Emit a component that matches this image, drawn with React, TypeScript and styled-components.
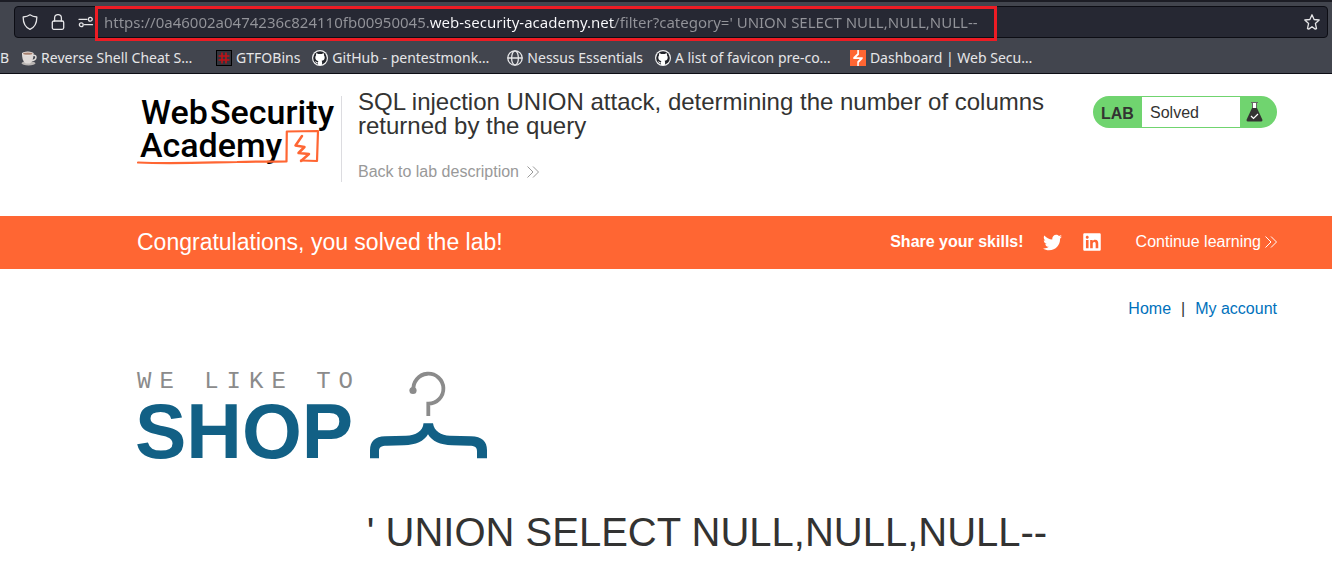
import React from "react";
import styled, { createGlobalStyle, css } from "styled-components";
import { FaTwitter, FaLinkedin } from "react-icons/fa";

const GlobalStyle = createGlobalStyle`
  * { box-sizing: border-box; }
  body {
    margin: 0;
    background: #fff;
    color: #333332;
    font: 16px/24px "Liberation Sans", Arial, sans-serif;
  }
  a { color: inherit; text-decoration: none; }
  h1, h2, p { margin: 0; font-weight: 400; }
  svg { display: block; flex: none; }
`;

/* ---------- browser chrome ---------- */

const Chrome = styled.div`
  background: #42454e;
  border-top: 2px solid #1c1d25;
  border-bottom: 1px solid #0c0d14;
  color: #e6e6e8;
  font-family: "Noto Sans", sans-serif;
  font-size: 15px;
`;

const AddressRow = styled.div`
  padding: 4px 4px 0 14px;
`;

const AddressBar = styled.div`
  display: flex;
  align-items: center;
  height: 32px;
  padding: 0 7px;
  background: #262833;
  border: 1px solid #0c0d14;
  border-radius: 4px;
`;

const ToolButton = styled.button<{ $end?: boolean }>`
  display: flex;
  justify-content: ${(p) => (p.$end ? "flex-end" : "flex-start")};
  width: 28px;
  padding: 0;
  border: 0;
  background: none;
  color: #e6e6e8;
`;

const UrlHighlight = styled.div`
  display: flex;
  align-items: center;
  width: 902px;
  height: 35px;
  margin: 2px auto 0 -11px;
  border: 3px solid #ed1c24;
`;

const UrlInput = styled.input`
  flex: 1;
  min-width: 0;
  height: 28px;
  margin: 0 6px;
  padding: 0 0 2px;
  border: 0;
  outline: 0;
  font: inherit;
  color: transparent;
  caret-color: #fff;
  background: linear-gradient(
    90deg,
    #93949a 0 326px,
    #fbfbfe 326px 511px,
    #93949a 511px
  );
  background-clip: text;
  -webkit-background-clip: text;
`;

const BookmarkBar = styled.nav`
  display: flex;
  align-items: center;
  gap: 12px;
  height: 35px;
  padding-top: 5px;
  overflow: hidden;
  white-space: nowrap;
  font-size: 14px;
`;

const Bookmark = styled.a`
  display: flex;
  flex: none;
  align-items: center;
  gap: 4px;
`;

const BookmarkTitle = styled.span<{ $long?: boolean }>`
  line-height: 24px;
  ${(p) => p.$long && css`width: 163px;`}
`;

/* ---------- lab header ---------- */

const Container = styled.div`
  padding: 0 55px 0 137px;
`;

const LabHeader = styled(Container).attrs({ as: "header" })`
  display: flex;
  align-items: flex-start;
  padding-top: 22px;
  padding-bottom: 32px;
`;

const AcademyLogo = styled.a`
  flex: none;
  height: 86px;
  width: 205px;
  border-right: 1px solid #dcdce0;
`;

const LabInfo = styled.div`
  flex: 1;
  padding: 0 40px 0 16px;
`;

const LabTitle = styled.h2`
  margin-top: -6px;
  font-size: 24px;
  line-height: 24px;
`;

const BackLink = styled.a`
  display: inline-flex;
  align-items: center;
  gap: 8px;
  margin-top: 22px;
  color: #999;
`;

const LabStatus = styled.div`
  display: flex;
  flex: none;
  width: 184px;
  height: 32px;
  padding: 1px 0;
  border-radius: 16px;
  background: #70d46f;
  line-height: 32px;
`;

const LabTag = styled.strong`
  width: 49px;
  padding-left: 8px;
  line-height: 34px;
`;

const LabState = styled.p`
  width: 98px;
  padding-left: 8px;
  background: #fff;
`;

const FlaskSlot = styled.span`
  padding: 4px 0 0 6px;
`;

/* ---------- solved banner ---------- */

const Banner = styled(Container).attrs({ as: "section" })`
  display: flex;
  align-items: center;
  height: 53px;
  padding-bottom: 1px;
  background: #ff6633;
  color: #fff;
`;

const BannerText = styled.p`
  margin-right: auto;
  font-size: 23px;
`;

const ShareLinks = styled.div`
  display: flex;
  align-items: center;
  gap: 20px;
  margin: 0 34px 0 19px;
`;

const ContinueLink = styled.a`
  display: flex;
  align-items: center;
  gap: 4px;
`;

/* ---------- shop ---------- */

const ShopNav = styled.nav`
  display: flex;
  justify-content: flex-end;
  gap: 10px;
  padding-top: 28px;
`;

const ShopLink = styled.a`
  color: #0071bc;
`;

const ShopLogo = styled.div`
  display: flex;
  align-items: flex-start;
  margin-top: 49px;
  height: 96px;
`;

const Wordmark = styled.div`
  width: 232px;
`;

const Tagline = styled.p`
  color: #8b8b8b;
  font-family: "Liberation Mono", monospace;
  font-size: 24px;
  line-height: 24px;
  letter-spacing: 8px;
  white-space: nowrap;
`;

const ShopName = styled.p`
  margin-left: -2px;
  color: #126085;
  font-size: 77px;
  font-weight: 700;
  line-height: 74px;
`;

const Query = styled.h1`
  padding: 42px 0 18px;
  font-size: 40px;
  line-height: 48px;
  text-align: center;
`;

/* ---------- drawings ---------- */

const line = { fill: "none", stroke: "currentColor", strokeWidth: 1.3, strokeLinecap: "round", strokeLinejoin: "round" } as const;

const Shield = () => (
  <svg width="16" height="16" viewBox="0 0 16 16" {...line}>
    <path d="M8 .8c2 1.500 4.300 2 6.800 2.200C14.900 8.500 12.500 13.300 8 15.300 3.500 13.300 1.100 8.500 1.200 3 3.700 2.800 6 2.300 8 .8Z" />
  </svg>
);

const Lock = () => (
  <svg width="16" height="16" viewBox="0 0 16 16" {...line}>
    <rect x="2.300" y="7" width="11.400" height="8.300" rx="1.500" />
    <path d="M4.600 7V4a3.400 3.400 0 0 1 6.800 0v3" />
  </svg>
);

const Permissions = () => (
  <svg width="16" height="16" viewBox="0 0 16 16" {...line}>
    <path d="M1 5.300h8M6.500 10.700h8" />
    <circle cx="12.300" cy="5.300" r="1.900" />
    <circle cx="3.300" cy="10.700" r="1.900" />
  </svg>
);

const Star = () => (
  <svg width="16" height="16" viewBox="0 0 16 16" {...line}>
    <path d="M8 .8l2.100 4.700 5.100.5-3.800 3.400 1.100 5.300-1.200.4L8 12.700l-3.300 2.400-1.200-.4 1.100-5.300L.8 6l5.100-.5Z" />
  </svg>
);

const Cup = () => (
  <svg width="16" height="16" viewBox="0 0 16 16">
    <ellipse cx="7.500" cy="13.200" rx="7" ry="2.200" fill="#b9b5b3" />
    <path d="M11.500 5.500c5-1.500 4.500 5-.8 5" fill="none" stroke="#dedbd9" strokeWidth="1.500" />
    <path d="M1 3.500h11.500c0 5-1 8.500-3.500 10H4.800C2 12 1 8 1 3.500Z" fill="#ded9d7" />
    <ellipse cx="6.800" cy="3.500" rx="5.800" ry="1.900" fill="#efeae8" />
    <ellipse cx="6.800" cy="3.700" rx="4.700" ry="1.100" fill="#a5806f" />
  </svg>
);

const HashTile = () => (
  <svg width="16" height="16" viewBox="0 0 16 16">
    <rect x=".5" y=".5" width="15" height="15" fill="#33353d" stroke="#000" />
    <path d="M6 2.500v11M10 2.500v11M2.500 6h11M2.500 10h11" stroke="#c01217" strokeWidth="1.600" fill="none" />
  </svg>
);

const Octocat = () => (
  <svg width="16" height="16" viewBox="0 0 16 16">
    <circle cx="8" cy="8" r="8" fill="#f2f2f3" />
    <circle cx="8" cy="8" r="6.800" fill="#22242a" />
    <path
      fill="#fff"
      d="M4.200 3.300c.9 0 1.500.5 2 .8 1.200-.3 2.400-.3 3.600 0 .5-.3 1.100-.8 2-.8.3.700.3 1.400.1 2 .5.6.8 1.300.8 2.100 0 2.300-1.400 3-3.100 3.300.4.400.5.9.5 1.500v2.500a7 7 0 0 1-4.200 0v-1.500c-1.700.3-2-.7-2.400-1.300-.2-.3-.5-.5-.8-.7.9-.2 1.400.3 1.800.9.300.4.700.6 1.400.4 0-.7.2-1.200.5-1.600-1.700-.3-3.100-1-3.100-3.500 0-.8.3-1.500.8-2.100-.2-.6-.2-1.300.1-2Z"
    />
  </svg>
);

const Globe = () => (
  <svg width="16" height="16" viewBox="0 0 16 16" {...line}>
    <circle cx="8" cy="8" r="7.200" />
    <ellipse cx="8" cy="8" rx="3.400" ry="7.200" />
    <path d="M1 8h14" />
  </svg>
);

const BurpTile = () => (
  <svg width="16" height="16" viewBox="0 0 16 16">
    <path fill="#ff6633" d="M0 0h16v16H0z" />
    <path fill="#fff" d="M7.300 0h1.600v4.800L6.300 7.300h6.400v1.500L8.800 12.800V16H7.300v-4.500L9.700 9H3.300V7.200l4-3.800Z" />
  </svg>
);

const Chevrons = () => (
  <svg width="12" height="12" viewBox="0 0 12 12" fill="none" stroke="currentColor">
    <path d="M.5.500 6 6 .5 11.500M6 .500 11.500 6 6 11.500" />
  </svg>
);

const Flask = () => (
  <svg width="18" height="22" viewBox="0 0 18 22">
    <path d="M6.500 2v5h4V2Z" fill="#fff" />
    <path d="M5 1.500h7M6.500 2v5M10.500 2v5" stroke="#666" fill="none" />
    <path d="M6 7h5l5.300 11.500q.7 2-1 2H1.700q-1.700 0-1-2Z" fill="#333332" />
    <path d="m5 15 2.500 2.500 4.500-4.500" fill="none" stroke="#fff" strokeWidth="1.200" />
  </svg>
);

const AcademyMark = () => (
  <svg width="204" height="78" viewBox="0 0 204 78" role="img" aria-label="Web Security Academy">
    <g fill="#000" fontFamily="Roboto, sans-serif" fontSize="34" fontWeight="500">
      <text x="4" y="28">Web</text>
      <text x="73" y="28">Security</text>
      <text x="3" y="61">Academy</text>
    </g>
    <g fill="none" stroke="#ff6633" strokeLinecap="round" strokeLinejoin="round">
      <path d="M1 66.500C35 68 70 66.500 100 66 120 65 135 66 149.500 65.500L149.800 35.500 181 35 180 65 164 64.500" strokeWidth="2.200" />
      <path d="m165 40-6.500 9.500 9 1.500-6 6 10.500 1-8 7" strokeWidth="2.500" />
    </g>
  </svg>
);

const Hanger = () => (
  <svg width="120" height="90" viewBox="0 0 120 90" fill="none">
    <path d="M44.500 20.500A15 15 0 1 1 59.300 33.700V46" stroke="#8b8b8b" strokeWidth="3.800" />
    <circle cx="44" cy="20.500" r="3.600" fill="#8b8b8b" />
    <path
      fill="#126085"
      d="M54.500 53.300h9.500c1 8 8 12 17 12.500l21 .5c11 .3 16 5 16 14v8h-10v-7c0-4-2-5.500-8-5.500l-17-.5c-12-.5-20-4-24-11-4 7-12 10.500-24 11l-17 .5c-6 0-8 1.500-8 5.500v7H1v-8c0-9 5-13.700 15-14l21-.5c10-.5 17-4.500 17.500-12.500Z"
    />
  </svg>
);

const bookmarks = [
  { title: "Reverse Shell Cheat S…", icon: <Cup />, long: true },
  { title: "GTFOBins", icon: <HashTile /> },
  { title: "GitHub - pentestmonk…", icon: <Octocat />, long: true },
  { title: "Nessus Essentials", icon: <Globe /> },
  { title: "A list of favicon pre-co…", icon: <Octocat />, long: true },
  { title: "Dashboard | Web Secu…", icon: <BurpTile />, long: true },
];

export default function App() {
  return (
    <>
      <GlobalStyle />
      <Chrome>
        <AddressRow>
          <AddressBar>
            <ToolButton aria-label="Tracking protection"><Shield /></ToolButton>
            <ToolButton aria-label="Connection security"><Lock /></ToolButton>
            <ToolButton aria-label="Permissions"><Permissions /></ToolButton>
            <UrlHighlight>
              <UrlInput
                aria-label="Address"
                spellCheck={false}
                defaultValue="https://0a46002a0474236c824110fb00950045.web-security-academy.net/filter?category=' UNION SELECT NULL,NULL,NULL--"
              />
            </UrlHighlight>
            <ToolButton aria-label="Bookmark this page" $end><Star /></ToolButton>
          </AddressBar>
        </AddressRow>
        <BookmarkBar>
          <Bookmark href="#"><BookmarkTitle>B</BookmarkTitle></Bookmark>
          {bookmarks.map((b) => (
            <Bookmark href="#" key={b.title}>
              {b.icon}
              <BookmarkTitle $long={b.long}>{b.title}</BookmarkTitle>
            </Bookmark>
          ))}
        </BookmarkBar>
      </Chrome>

      <LabHeader>
        <AcademyLogo href="#"><AcademyMark /></AcademyLogo>
        <LabInfo>
          <LabTitle>SQL injection UNION attack, determining the number of columns returned by the query</LabTitle>
          <BackLink href="#">Back to lab description <Chevrons /></BackLink>
        </LabInfo>
        <LabStatus>
          <LabTag>LAB</LabTag>
          <LabState>Solved</LabState>
          <FlaskSlot><Flask /></FlaskSlot>
        </LabStatus>
      </LabHeader>

      <Banner>
        <BannerText>Congratulations, you solved the lab!</BannerText>
        <strong>Share your skills!</strong>
        <ShareLinks>
          <a href="#" aria-label="Share on Twitter"><FaTwitter size={19} /></a>
          <a href="#" aria-label="Share on LinkedIn"><FaLinkedin size={20} /></a>
        </ShareLinks>
        <ContinueLink href="#">Continue learning <Chevrons /></ContinueLink>
      </Banner>

      <Container as="main">
        <ShopNav>
          <ShopLink href="#">Home</ShopLink>
          <span>|</span>
          <ShopLink href="#">My account</ShopLink>
        </ShopNav>
        <ShopLogo>
          <Wordmark>
            <Tagline>WE LIKE TO</Tagline>
            <ShopName>SHOP</ShopName>
          </Wordmark>
          <Hanger />
        </ShopLogo>
        <Query>' UNION SELECT NULL,NULL,NULL--</Query>
      </Container>
    </>
  );
}
